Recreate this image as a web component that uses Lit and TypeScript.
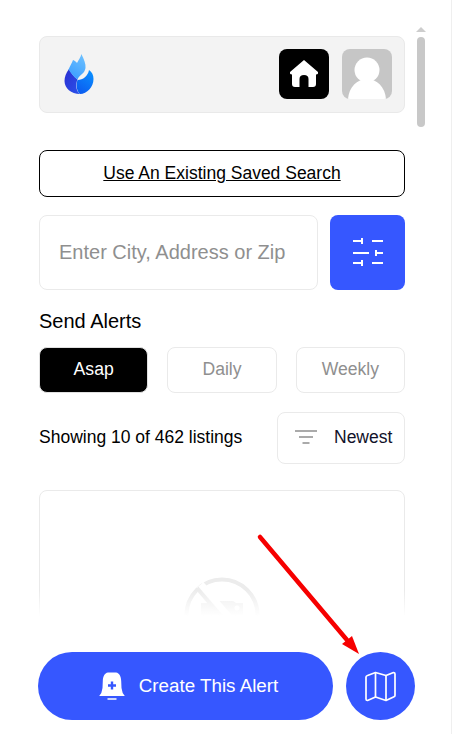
import { LitElement, html, css } from "lit";
import { customElement } from "lit/decorators.js";

@customElement("app-root")
export class AppRoot extends LitElement {
  static styles = css`
    :host {
      display: block;
      position: relative;
      width: 452px;
      height: 734px;
      overflow: hidden;
      background: #fff;
      font-family: "Liberation Sans", Arial, sans-serif;
      color: #000;
    }
    * { box-sizing: border-box; }
    .edge { position: absolute; right: 0; top: 0; bottom: 0; width: 1px; background: #efefef; }
    .sb-arrow {
      position: absolute; left: 416px; top: 27px; width: 0; height: 0;
      border-left: 5px solid transparent; border-right: 5px solid transparent;
      border-bottom: 5px solid #cdcdcd;
    }
    .sb-thumb { position: absolute; left: 417px; top: 37px; width: 8px; height: 90px; border-radius: 4px; background: #c8c8c8; }
    .page {
      width: 405px; padding: 36px 0 0 39px;
      display: flex; flex-direction: column;
    }
    .header {
      height: 77px; background: #f3f3f3; border: 1px solid #e9e9e9; border-radius: 8px;
      display: flex; align-items: center; padding: 0 12px 2px 23px;
    }
    .logo { width: 32px; height: 42px; display: block; }
    .header-actions { margin-left: auto; display: flex; gap: 13px; }
    .tile { width: 50px; height: 50px; border-radius: 8px; display: flex; align-items: center; justify-content: center; overflow: hidden; }
    .tile.home { background: #000; }
    .tile.avatar { background: #c6c6c6; }
    .saved {
      margin-top: 37px; height: 47px; border: 1px solid #000; border-radius: 8px;
      display: flex; align-items: center; justify-content: center;
      font-size: 17.5px; text-decoration: underline; color: #000;
    }
    .search { margin-top: 18px; display: flex; gap: 12px; }
    .input {
      flex: 1; height: 75px; border: 1px solid #eaeaea; border-radius: 8px;
      display: flex; align-items: center; padding-left: 19px; font-size: 20px; color: #8f8f8f;
    }
    .filter { width: 75px; height: 75px; border-radius: 8px; background: #3657ff; display: flex; align-items: center; justify-content: center; }
    .label { margin-top: 20px; font-size: 20px; line-height: 23px; }
    .tabs { margin-top: 14px; display: flex; gap: 19px; }
    .tab {
      flex: 1; height: 46px; border: 1px solid #eaeaea; border-radius: 8px; padding-bottom: 2px;
      display: flex; align-items: center; justify-content: center; font-size: 17.6px; color: #8f8f8f;
    }
    .tab.on { background: #000; color: #fff; border-color: #e0e0e0; }
    .result { margin-top: 19px; display: flex; align-items: center; justify-content: space-between; }
    .count { font-size: 17.5px; padding-bottom: 2px; }
    .sort {
      width: 128px; height: 52px; border: 1px solid #eaeaea; border-radius: 8px; padding-bottom: 2px;
      display: flex; align-items: center; padding-left: 17px; gap: 17px; font-size: 17.5px; color: #12122a;
    }
    .card {
      margin-top: 26px; height: 200px; border: 1px solid #eaeaea; border-radius: 8px;
      display: flex; justify-content: center; padding-top: 86px;
    }
    .fade {
      position: absolute; left: 0; width: 416px; top: 590px; height: 144px;
      background: linear-gradient(to bottom, rgba(255,255,255,0) 0, #fff 26px);
    }
    .bottom {
      position: absolute; left: 38px; top: 652px; display: flex; gap: 13px;
    }
    .create {
      width: 295px; height: 68px; border-radius: 34px; background: #3657ff; color: #fff;
      display: flex; align-items: center; justify-content: center; gap: 14px; font-size: 18.8px;
      padding-left: 6px;
    }
    .map { width: 69px; height: 68px; border-radius: 50%; background: #3657ff; display: flex; align-items: center; justify-content: center; }
    .arrow { position: absolute; left: 250px; top: 528px; width: 120px; height: 135px; }
    svg { display: block; }
  `;

  render() {
    return html`
      <div class="page">
        <div class="header">
          <svg class="logo" viewBox="0 0 32 42">
            <defs>
              <linearGradient id="l1" x1="0.7" y1="0" x2="0.3" y2="1"><stop offset="0" stop-color="#6cc0ff"/><stop offset="1" stop-color="#3a9dff"/></linearGradient>
              <linearGradient id="l2" x1="0" y1="0" x2="1" y2="1"><stop offset="0" stop-color="#2b2fd2"/><stop offset="1" stop-color="#2a52ea"/></linearGradient>
              <linearGradient id="l3" x1="0.8" y1="0" x2="0.3" y2="1"><stop offset="0" stop-color="#0a90ff"/><stop offset="1" stop-color="#0b5cf0"/></linearGradient>
            </defs>
            <path d="M6 16 C3 20 1.500 24 1.500 28 C1.500 35 8 41 17 41 C13.500 38 12 33 14.500 26.500 C11 24 8 20 6 16 Z" fill="url(#l2)"/>
            <path d="M26 17 C29 19 30.500 22 30.500 26 C30.500 34 24 41 17 41 C14 38 12.500 33 14.500 27 C20 27 25 23 26 17 Z" fill="url(#l3)"/>
            <path d="M18.300 1 C21 6 23 11 22.500 15 C22 18 20.500 20 19 21 C17 22.500 15.500 24 14.500 26.500 C11 24 8 20 5.500 16.500 C7 13 9 10 10 7 C11.500 7.500 13 8.500 14 10 C15.500 7 18 4 18.300 1 Z" fill="url(#l1)"/>
          </svg>
          <div class="header-actions">
            <div class="tile home">
              <svg width="30" height="27" viewBox="0 1 30 27">
                <path d="M15 1 L29 13 Q29.500 15.500 27 15.500 L27 15.500 L27 25 Q27 28 24 28 L19.500 28 L19.500 20 Q19.500 16 15 16 Q10.500 16 10.500 20 L10.500 28 L6 28 Q3 28 3 25 L3 15.500 Q0.500 15.500 1 13 Z" fill="#fff"/>
              </svg>
            </div>
            <div class="tile avatar">
              <svg width="50" height="50" viewBox="0 0 50 50">
                <circle cx="25" cy="21" r="12.500" fill="#fff"/>
                <path d="M6 50 C7 38 15 30 25 30 C35 30 43 38 44 50 Z" fill="#fff"/>
              </svg>
            </div>
          </div>
        </div>

        <div class="saved">Use An Existing Saved Search</div>

        <div class="search">
          <div class="input">Enter City, Address or Zip</div>
          <div class="filter">
            <svg width="30" height="30" viewBox="0 0 30 30" fill="none" stroke="#fff" stroke-width="2">
              <path d="M0 3 H10 M9 0 V6 M19 3 H30"/>
              <path d="M0 15 H16 M22 15 H30 M23 12 V18"/>
              <path d="M0 25 H10 M9 22 V28 M19 25 H30"/>
            </svg>
          </div>
        </div>

        <div class="label">Send Alerts</div>

        <div class="tabs">
          <div class="tab on">Asap</div>
          <div class="tab">Daily</div>
          <div class="tab">Weekly</div>
        </div>

        <div class="result">
          <div class="count">Showing 10 of 462 listings</div>
          <div class="sort">
            <svg width="22" height="16" viewBox="0 0 22 16" fill="none" stroke="#8f8f8f" stroke-width="1.500">
              <path d="M0 2 H22 M4 8 H18 M7.500 14 H14.500"/>
            </svg>
            <span>Newest</span>
          </div>
        </div>

        <div class="card">
          <svg width="76" height="76" viewBox="0 0 76 76" fill="none">
            <circle cx="38" cy="38" r="35.500" stroke="#ececec" stroke-width="4"/>
            <path d="M17 26 H29 L33 24 H49 L52 26 H59 V56 H17 Z" fill="#eeeeee"/>
            <circle cx="53" cy="31" r="2.500" fill="#fff"/>
            <path d="M16 8 L62 62" stroke="#fff" stroke-width="9"/>
            <path d="M13 11 L60 66" stroke="#ececec" stroke-width="4"/>
          </svg>
        </div>
      </div>

      <div class="fade"></div>

      <div class="edge"></div>
      <div class="sb-arrow"></div>
      <div class="sb-thumb"></div>

      <div class="bottom">
        <div class="create">
          <svg width="26" height="28" viewBox="0 0 26 28">
            <path d="M9 0.500 L17 0.500 C20.500 1 22 4.500 22.200 9 L22.500 16 Q23 21 25.800 24 L0.200 24 Q3 21 3.500 16 L3.800 9 C4 4.500 5.500 1 9 0.500 Z" fill="#fff"/>
            <path d="M8.500 27 H17.500" stroke="#fff" stroke-width="1.500"/>
            <path d="M13 9.500 V17.500 M9 13.500 H17" stroke="#3657ff" stroke-width="2.400"/>
          </svg>
          <span>Create This Alert</span>
        </div>
        <div class="map">
          <svg width="31" height="31" viewBox="0 0 31 31" fill="none" stroke="#fff" stroke-width="1.700" stroke-linejoin="round">
            <path d="M1 6 Q1 5 2.500 4.500 L10.500 1.500 L21 4.500 L28.500 1.500 Q30 1.500 30 3 L30 24.500 Q30 25.500 28.500 26 L21 29.500 L10.500 26 L2.500 29.500 Q1 29.500 1 28 Z"/>
            <path d="M10.500 1.500 V26 M21 4.500 V29.500"/>
          </svg>
        </div>
      </div>

      <svg class="arrow" viewBox="0 0 120 135" fill="none">
        <path d="M10 9 L97 112" stroke="#f60000" stroke-width="4.500" stroke-linecap="round"/>
        <path d="M109 126 L92 116 L102 108 Z" fill="#f60000"/>
      </svg>
    `;
  }
}
